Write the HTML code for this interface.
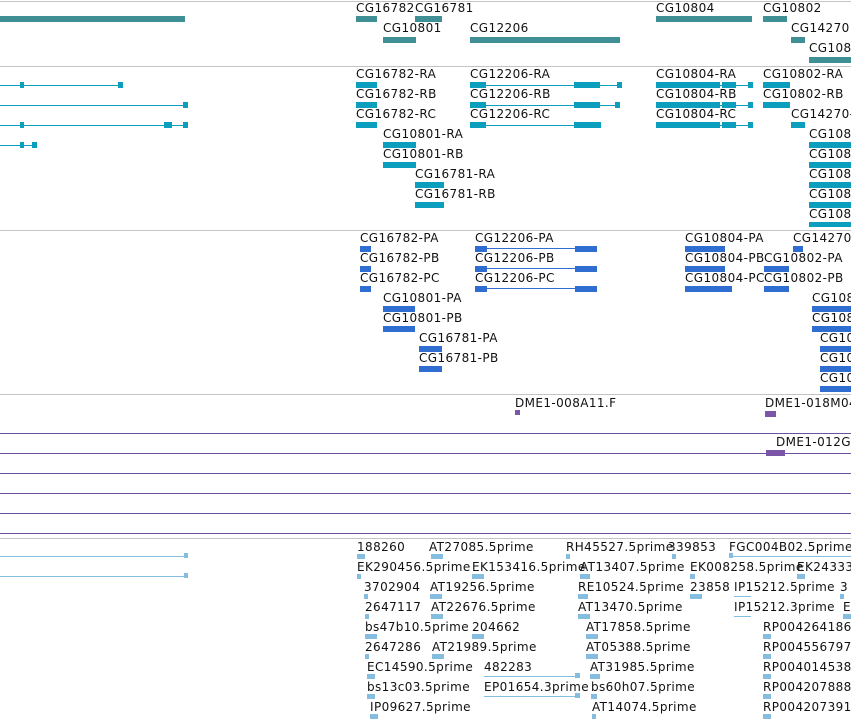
<!DOCTYPE html>
<html><head><meta charset="utf-8"><style>
body{margin:0;width:851px;height:722px;overflow:hidden;background:#fff;position:relative;font-family:"DejaVu Sans","Liberation Sans",sans-serif}
div{position:absolute}
.t{font-size:12px;line-height:14px;letter-spacing:0.4px;color:#111;white-space:nowrap}
.g{height:1px;left:0;width:851px;background:#c4c4c4}
.p{height:1px;left:0;width:851px;background:#6e4fa0}
.a{background:#3f8f94;height:6px}
.c{background:#0c9fbd;height:6px}
.cl{background:#0c9fbd;height:1px}
.d{background:#2f6dd0;height:6px}
.dl{background:#2f6dd0;height:1px}
.e{background:#84bde0;height:5px}
.el{background:#84bde0;height:1px}
</style></head><body>
<div class="g" style="top:1px"></div>
<div class="g" style="top:66px"></div>
<div class="g" style="top:230px"></div>
<div class="g" style="top:394px"></div>
<div class="p" style="top:433px"></div>
<div class="p" style="top:453px"></div>
<div class="p" style="top:473px"></div>
<div class="p" style="top:493px"></div>
<div class="p" style="top:513px"></div>
<div class="p" style="top:533px"></div>
<div class="g" style="top:538px"></div>

<div class="a" style="left:0;top:16px;width:185px"></div>
<div class="t" style="left:356px;top:1px">CG16782</div>
<div class="t" style="left:415px;top:1px">CG16781</div>
<div class="t" style="left:656px;top:1px">CG10804</div>
<div class="t" style="left:763px;top:1px">CG10802</div>
<div class="a" style="left:356px;top:16px;width:21px"></div>
<div class="a" style="left:415px;top:16px;width:27px"></div>
<div class="a" style="left:656px;top:16px;width:96px"></div>
<div class="a" style="left:763px;top:16px;width:24px"></div>
<div class="t" style="left:383px;top:21px">CG10801</div>
<div class="t" style="left:470px;top:21px">CG12206</div>
<div class="t" style="left:791px;top:21px">CG14270</div>
<div class="a" style="left:383px;top:37px;width:33px"></div>
<div class="a" style="left:470px;top:37px;width:150px"></div>
<div class="a" style="left:791px;top:37px;width:14px"></div>
<div class="t" style="left:809px;top:41px">CG108</div>
<div class="a" style="left:809px;top:57px;width:42px"></div>

<div class="cl" style="left:0;top:85px;width:123px"></div>
<div class="c" style="left:20px;top:82px;width:4px"></div><div class="c" style="left:118px;top:82px;width:5px"></div>
<div class="cl" style="left:0;top:105px;width:188px"></div><div class="c" style="left:183px;top:102px;width:5px"></div>
<div class="cl" style="left:0;top:125px;width:188px"></div>
<div class="c" style="left:20px;top:122px;width:4px"></div><div class="c" style="left:164px;top:122px;width:8px"></div><div class="c" style="left:183px;top:122px;width:5px"></div>
<div class="cl" style="left:0;top:145px;width:37px"></div>
<div class="c" style="left:20px;top:142px;width:4px"></div><div class="c" style="left:32px;top:142px;width:5px"></div>

<div class="t" style="left:356px;top:67px">CG16782-RA</div>
<div class="t" style="left:470px;top:67px">CG12206-RA</div>
<div class="t" style="left:656px;top:67px">CG10804-RA</div>
<div class="t" style="left:763px;top:67px">CG10802-RA</div>
<div class="t" style="left:356px;top:87px">CG16782-RB</div>
<div class="t" style="left:470px;top:87px">CG12206-RB</div>
<div class="t" style="left:656px;top:87px">CG10804-RB</div>
<div class="t" style="left:763px;top:87px">CG10802-RB</div>
<div class="t" style="left:356px;top:107px">CG16782-RC</div>
<div class="t" style="left:470px;top:107px">CG12206-RC</div>
<div class="t" style="left:656px;top:107px">CG10804-RC</div>
<div class="t" style="left:791px;top:107px">CG14270-</div>
<div class="t" style="left:383px;top:127px">CG10801-RA</div>
<div class="t" style="left:383px;top:147px">CG10801-RB</div>
<div class="t" style="left:415px;top:167px">CG16781-RA</div>
<div class="t" style="left:415px;top:187px">CG16781-RB</div>
<div class="t" style="left:809px;top:127px">CG108</div>
<div class="t" style="left:809px;top:147px">CG108</div>
<div class="t" style="left:809px;top:167px">CG108</div>
<div class="t" style="left:809px;top:187px">CG108</div>
<div class="t" style="left:809px;top:207px">CG108</div>
<div class="c" style="left:356px;top:82px;width:21px"></div>
<div class="c" style="left:356px;top:102px;width:21px"></div>
<div class="c" style="left:356px;top:122px;width:21px"></div>
<div class="cl" style="left:470px;top:85px;width:152px"></div><div class="c" style="left:470px;top:82px;width:16px"></div><div class="c" style="left:574px;top:82px;width:26px"></div><div class="c" style="left:617px;top:82px;width:5px"></div>
<div class="cl" style="left:470px;top:105px;width:150px"></div><div class="c" style="left:470px;top:102px;width:16px"></div><div class="c" style="left:574px;top:102px;width:26px"></div><div class="c" style="left:615px;top:102px;width:5px"></div>
<div class="cl" style="left:470px;top:125px;width:130px"></div><div class="c" style="left:470px;top:122px;width:16px"></div><div class="c" style="left:574px;top:122px;width:27px"></div>
<div class="cl" style="left:656px;top:85px;width:97px"></div><div class="c" style="left:656px;top:82px;width:64px"></div><div class="c" style="left:722px;top:82px;width:14px"></div><div class="c" style="left:748px;top:82px;width:5px"></div>
<div class="cl" style="left:656px;top:105px;width:97px"></div><div class="c" style="left:656px;top:102px;width:64px"></div><div class="c" style="left:722px;top:102px;width:14px"></div><div class="c" style="left:748px;top:102px;width:5px"></div>
<div class="cl" style="left:656px;top:125px;width:97px"></div><div class="c" style="left:656px;top:122px;width:64px"></div><div class="c" style="left:722px;top:122px;width:14px"></div><div class="c" style="left:748px;top:122px;width:5px"></div>
<div class="c" style="left:763px;top:82px;width:27px"></div>
<div class="c" style="left:763px;top:102px;width:27px"></div>
<div class="c" style="left:791px;top:122px;width:14px"></div>
<div class="c" style="left:383px;top:142px;width:33px"></div>
<div class="c" style="left:383px;top:162px;width:33px"></div>
<div class="c" style="left:415px;top:182px;width:29px"></div>
<div class="c" style="left:415px;top:202px;width:29px"></div>
<div class="c" style="left:809px;top:142px;width:42px"></div>
<div class="c" style="left:809px;top:162px;width:42px"></div>
<div class="c" style="left:809px;top:182px;width:42px"></div>
<div class="c" style="left:809px;top:202px;width:42px"></div>
<div class="c" style="left:809px;top:222px;width:42px;height:5px"></div>

<div class="t" style="left:360px;top:231px">CG16782-PA</div>
<div class="t" style="left:475px;top:231px">CG12206-PA</div>
<div class="t" style="left:685px;top:231px">CG10804-PA</div>
<div class="t" style="left:793px;top:231px">CG14270</div>
<div class="t" style="left:360px;top:251px">CG16782-PB</div>
<div class="t" style="left:475px;top:251px">CG12206-PB</div>
<div class="t" style="left:685px;top:251px">CG10804-PB</div>
<div class="t" style="left:764px;top:251px">CG10802-PA</div>
<div class="t" style="left:360px;top:271px">CG16782-PC</div>
<div class="t" style="left:475px;top:271px">CG12206-PC</div>
<div class="t" style="left:685px;top:271px">CG10804-PC</div>
<div class="t" style="left:764px;top:271px">CG10802-PB</div>
<div class="t" style="left:383px;top:291px">CG10801-PA</div>
<div class="t" style="left:383px;top:311px">CG10801-PB</div>
<div class="t" style="left:419px;top:331px">CG16781-PA</div>
<div class="t" style="left:419px;top:351px">CG16781-PB</div>
<div class="t" style="left:812px;top:291px">CG108</div>
<div class="t" style="left:812px;top:311px">CG108</div>
<div class="t" style="left:820px;top:331px">CG10</div>
<div class="t" style="left:820px;top:351px">CG10</div>
<div class="t" style="left:820px;top:371px">CG10</div>
<div class="d" style="left:360px;top:246px;width:11px"></div>
<div class="d" style="left:360px;top:266px;width:11px"></div>
<div class="d" style="left:360px;top:286px;width:11px"></div>
<div class="dl" style="left:475px;top:248px;width:122px"></div><div class="d" style="left:475px;top:246px;width:12px"></div><div class="d" style="left:575px;top:246px;width:22px"></div>
<div class="dl" style="left:475px;top:268px;width:122px"></div><div class="d" style="left:475px;top:266px;width:12px"></div><div class="d" style="left:575px;top:266px;width:22px"></div>
<div class="dl" style="left:475px;top:288px;width:122px"></div><div class="d" style="left:475px;top:286px;width:12px"></div><div class="d" style="left:575px;top:286px;width:22px"></div>
<div class="d" style="left:685px;top:246px;width:40px"></div>
<div class="d" style="left:685px;top:266px;width:40px"></div>
<div class="d" style="left:685px;top:286px;width:47px"></div>
<div class="d" style="left:793px;top:246px;width:10px"></div>
<div class="d" style="left:764px;top:266px;width:25px"></div>
<div class="d" style="left:764px;top:286px;width:25px"></div>
<div class="d" style="left:383px;top:306px;width:32px"></div>
<div class="d" style="left:383px;top:326px;width:32px"></div>
<div class="d" style="left:419px;top:346px;width:23px"></div>
<div class="d" style="left:419px;top:366px;width:23px"></div>
<div class="d" style="left:812px;top:306px;width:39px"></div>
<div class="d" style="left:812px;top:326px;width:39px"></div>
<div class="d" style="left:820px;top:346px;width:31px"></div>
<div class="d" style="left:820px;top:366px;width:31px"></div>
<div class="d" style="left:820px;top:386px;width:31px"></div>

<div class="t" style="left:515px;top:396px">DME1-008A11.F</div>
<div style="left:515px;top:410px;width:5px;height:5px;background:#7a55a8"></div>
<div class="t" style="left:765px;top:396px">DME1-018M04</div>
<div style="left:765px;top:411px;width:11px;height:6px;background:#7a55a8"></div>
<div class="t" style="left:776px;top:435px">DME1-012G</div>
<div style="left:766px;top:450px;width:19px;height:6px;background:#7a55a8"></div>

<div class="el" style="left:0;top:556px;width:188px"></div><div class="e" style="left:184px;top:553px;width:4px"></div>
<div class="el" style="left:0;top:576px;width:188px"></div><div class="e" style="left:184px;top:573px;width:4px"></div>
<div class="t" style="left:357px;top:540px">188260</div>
<div class="t" style="left:429px;top:540px">AT27085.5prime</div>
<div class="t" style="left:566px;top:540px">RH45527.5prime</div>
<div class="t" style="left:668px;top:540px">339853</div>
<div class="t" style="left:729px;top:540px">FGC004B02.5prime</div>
<div class="t" style="left:357px;top:560px">EK290456.5prime</div>
<div class="t" style="left:472px;top:560px">EK153416.5prime</div>
<div class="t" style="left:580px;top:560px">AT13407.5prime</div>
<div class="t" style="left:690px;top:560px">EK008258.5prime</div>
<div class="t" style="left:797px;top:560px">EK24333</div>
<div class="t" style="left:364px;top:580px">3702904</div>
<div class="t" style="left:430px;top:580px">AT19256.5prime</div>
<div class="t" style="left:578px;top:580px">RE10524.5prime</div>
<div class="t" style="left:690px;top:580px">23858</div>
<div class="t" style="left:734px;top:580px">IP15212.5prime</div>
<div class="t" style="left:840px;top:580px">3</div>
<div class="t" style="left:365px;top:600px">2647117</div>
<div class="t" style="left:431px;top:600px">AT22676.5prime</div>
<div class="t" style="left:578px;top:600px">AT13470.5prime</div>
<div class="t" style="left:734px;top:600px">IP15212.3prime</div>
<div class="t" style="left:843px;top:600px">E</div>
<div class="t" style="left:365px;top:620px">bs47b10.5prime</div>
<div class="t" style="left:472px;top:620px">204662</div>
<div class="t" style="left:586px;top:620px">AT17858.5prime</div>
<div class="t" style="left:763px;top:620px">RP004264186</div>
<div class="t" style="left:365px;top:640px">2647286</div>
<div class="t" style="left:432px;top:640px">AT21989.5prime</div>
<div class="t" style="left:586px;top:640px">AT05388.5prime</div>
<div class="t" style="left:763px;top:640px">RP004556797</div>
<div class="t" style="left:367px;top:660px">EC14590.5prime</div>
<div class="t" style="left:484px;top:660px">482283</div>
<div class="t" style="left:590px;top:660px">AT31985.5prime</div>
<div class="t" style="left:763px;top:660px">RP004014538</div>
<div class="t" style="left:367px;top:680px">bs13c03.5prime</div>
<div class="t" style="left:484px;top:680px">EP01654.3prime</div>
<div class="t" style="left:591px;top:680px">bs60h07.5prime</div>
<div class="t" style="left:763px;top:680px">RP004207888</div>
<div class="t" style="left:370px;top:700px">IP09627.5prime</div>
<div class="t" style="left:592px;top:700px">AT14074.5prime</div>
<div class="t" style="left:763px;top:700px">RP004207391</div>
<div class="e" style="left:357px;top:554px;width:8px"></div>
<div class="e" style="left:431px;top:554px;width:12px"></div>
<div class="e" style="left:566px;top:554px;width:4px"></div>
<div class="e" style="left:672px;top:554px;width:4px"></div>
<div class="el" style="left:729px;top:556px;width:122px"></div><div class="e" style="left:729px;top:553px;width:4px"></div>
<div class="e" style="left:357px;top:574px;width:4px"></div>
<div class="e" style="left:472px;top:574px;width:12px"></div>
<div class="e" style="left:580px;top:574px;width:10px"></div>
<div class="e" style="left:690px;top:574px;width:5px"></div>
<div class="e" style="left:797px;top:574px;width:8px"></div>
<div class="e" style="left:364px;top:594px;width:4px"></div>
<div class="e" style="left:430px;top:594px;width:12px"></div>
<div class="e" style="left:578px;top:594px;width:10px"></div>
<div class="e" style="left:690px;top:594px;width:12px"></div>
<div class="el" style="left:734px;top:596px;width:17px"></div>
<div class="e" style="left:840px;top:594px;width:4px"></div>
<div class="e" style="left:365px;top:614px;width:4px"></div>
<div class="e" style="left:431px;top:614px;width:12px"></div>
<div class="e" style="left:578px;top:614px;width:12px"></div>
<div class="el" style="left:734px;top:616px;width:17px"></div>
<div class="e" style="left:843px;top:614px;width:8px"></div>
<div class="e" style="left:365px;top:634px;width:12px"></div>
<div class="e" style="left:472px;top:634px;width:12px"></div>
<div class="e" style="left:586px;top:634px;width:12px"></div>
<div class="e" style="left:763px;top:634px;width:8px"></div>
<div class="e" style="left:365px;top:654px;width:4px"></div>
<div class="e" style="left:432px;top:654px;width:12px"></div>
<div class="e" style="left:586px;top:654px;width:12px"></div>
<div class="e" style="left:763px;top:654px;width:8px"></div>
<div class="e" style="left:367px;top:674px;width:8px"></div>
<div class="el" style="left:484px;top:676px;width:96px"></div><div class="e" style="left:575px;top:673px;width:5px"></div>
<div class="e" style="left:590px;top:674px;width:10px"></div>
<div class="e" style="left:763px;top:674px;width:8px"></div>
<div class="e" style="left:367px;top:694px;width:8px"></div>
<div class="el" style="left:484px;top:696px;width:96px"></div><div class="e" style="left:575px;top:693px;width:5px"></div>
<div class="e" style="left:591px;top:694px;width:6px"></div>
<div class="e" style="left:763px;top:694px;width:8px"></div>
<div class="e" style="left:370px;top:714px;width:8px"></div>
<div class="e" style="left:592px;top:714px;width:4px"></div>
<div class="e" style="left:763px;top:714px;width:8px"></div>
</body></html>
